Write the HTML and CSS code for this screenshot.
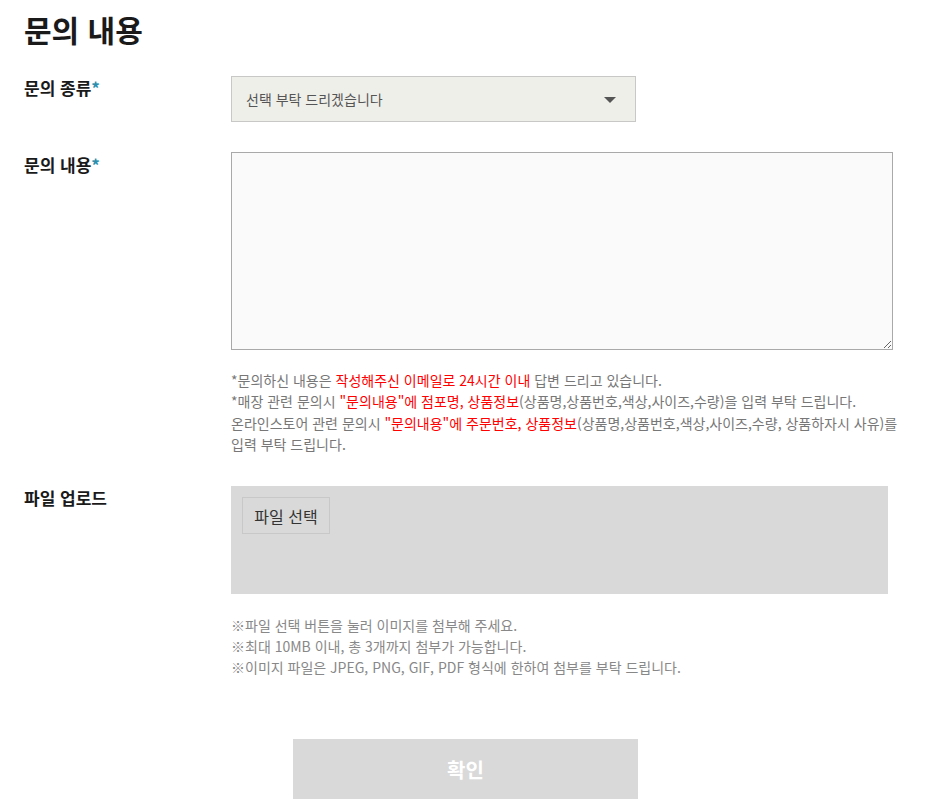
FILE: index.html
```html
<!DOCTYPE html>
<html lang="ko">
<head>
<meta charset="utf-8">
<title>문의 내용</title>
<link rel="stylesheet" href="styles.css">
</head>
<body>
<div class="page">
  <h1 class="title">문의 내용</h1>

  <div class="row row-type">
    <div class="label">문의 종류<span class="req">*</span></div>
    <div class="field">
      <div class="select">
        <span class="select-text">선택 부탁 드리겠습니다</span>
        <svg class="caret" width="12" height="6" viewBox="0 0 12 6"><path d="M0 0H12L6 6Z" fill="#555"/></svg>
      </div>
    </div>
  </div>

  <div class="row row-content">
    <div class="label">문의 내용<span class="req">*</span></div>
    <div class="field">
      <textarea class="textarea"></textarea>
      <div class="notes">
        <p>*문의하신 내용은 <span class="red">작성해주신 이메일로 24시간 이내</span> 답변 드리고 있습니다.</p>
        <p>*매장 관련 문의시 <span class="red">"문의내용"에 점포명, 상품정보</span>(상품명,상품번호,색상,사이즈,수량)을 입력 부탁 드립니다.</p>
        <p>온라인스토어 관련 문의시 <span class="red">"문의내용"에 주문번호, 상품정보</span>(상품명,상품번호,색상,사이즈,수량, 상품하자시 사유)를 입력 부탁 드립니다.</p>
      </div>
    </div>
  </div>

  <div class="row row-file">
    <div class="label">파일 업로드</div>
    <div class="field">
      <div class="filebox">
        <button class="filebtn" type="button">파일 선택</button>
      </div>
      <div class="notes notes-file">
        <p>※파일 선택 버튼을 눌러 이미지를 첨부해 주세요.</p>
        <p>※최대 10MB 이내, 총 3개까지 첨부가 가능합니다.</p>
        <p>※이미지 파일은 JPEG, PNG, GIF, PDF 형식에 한하여 첨부를 부탁 드립니다.</p>
      </div>
    </div>
  </div>

  <div class="actions">
    <button class="submit" type="button">확인</button>
  </div>
</div>
</body>
</html>
```

FILE: styles.css
```css
* { box-sizing: border-box; }
html, body { margin: 0; padding: 0; background: #fff; }
body {
  font-family: "Noto Sans CJK KR", "Noto Sans", "Liberation Sans", sans-serif;
  color: #222;
}
.page {
  padding: 8px 0 0 24px;
  width: 949px;
}
.title {
  margin: 0;
  font-size: 30px;
  line-height: 42px;
  font-weight: 700;
  color: #1a1a1a;
}
.row {
  display: grid;
  grid-template-columns: 207px 1fr;
}
.row-type { margin-top: 26px; }
.row-content { margin-top: 31px; }
.row-file { margin-top: 31px; }
.label {
  font-size: 17px;
  font-weight: 700;
  line-height: 24px;
  color: #1a1a1a;
  padding-top: 0;
}
.req { color: #2b8fad; }
.select {
  width: 405px;
  height: 46px;
  background: #efefea;
  border: 1px solid #c8c8c6;
  display: flex;
  align-items: center;
  justify-content: space-between;
  padding: 0 19px 0 14px;
}
.select-text {
  font-size: 14px;
  color: #555;
}
.caret { display: block; margin-top: 1px; }
.textarea {
  display: block;
  width: 662px;
  height: 198px;
  margin: -1px 0 0 0;
  border: 1px solid #a9a9a9;
  background: #fafafa;
  border-radius: 0;
  resize: both;
  font-family: inherit;
}
.notes {
  margin-top: 20px;
  font-size: 14px;
  line-height: 21.3px;
  color: #777;
  width: 676px;
}
.notes p { margin: 0; }
.red { color: #ff0000; }
.filebox {
  width: 657px;
  height: 108px;
  background: #d9d9d9;
  padding: 11px;
}
.filebtn {
  display: block;
  width: 88px;
  height: 37px;
  border: 1px solid #c8c8c8;
  background: #d9d9d9;
  font-family: inherit;
  font-size: 16px;
  color: #333;
  padding: 0;
  cursor: pointer;
}
.notes-file {
  margin-top: 21px;
  color: #888;
  line-height: 21px;
}
.actions {
  margin-top: 61px;
  padding-left: 269px;
}
.submit {
  display: block;
  width: 345px;
  height: 60px;
  border: 0;
  background: #d9d9d9;
  color: #fff;
  font-family: inherit;
  font-size: 20px;
  font-weight: 700;
  padding: 0;
}
```
